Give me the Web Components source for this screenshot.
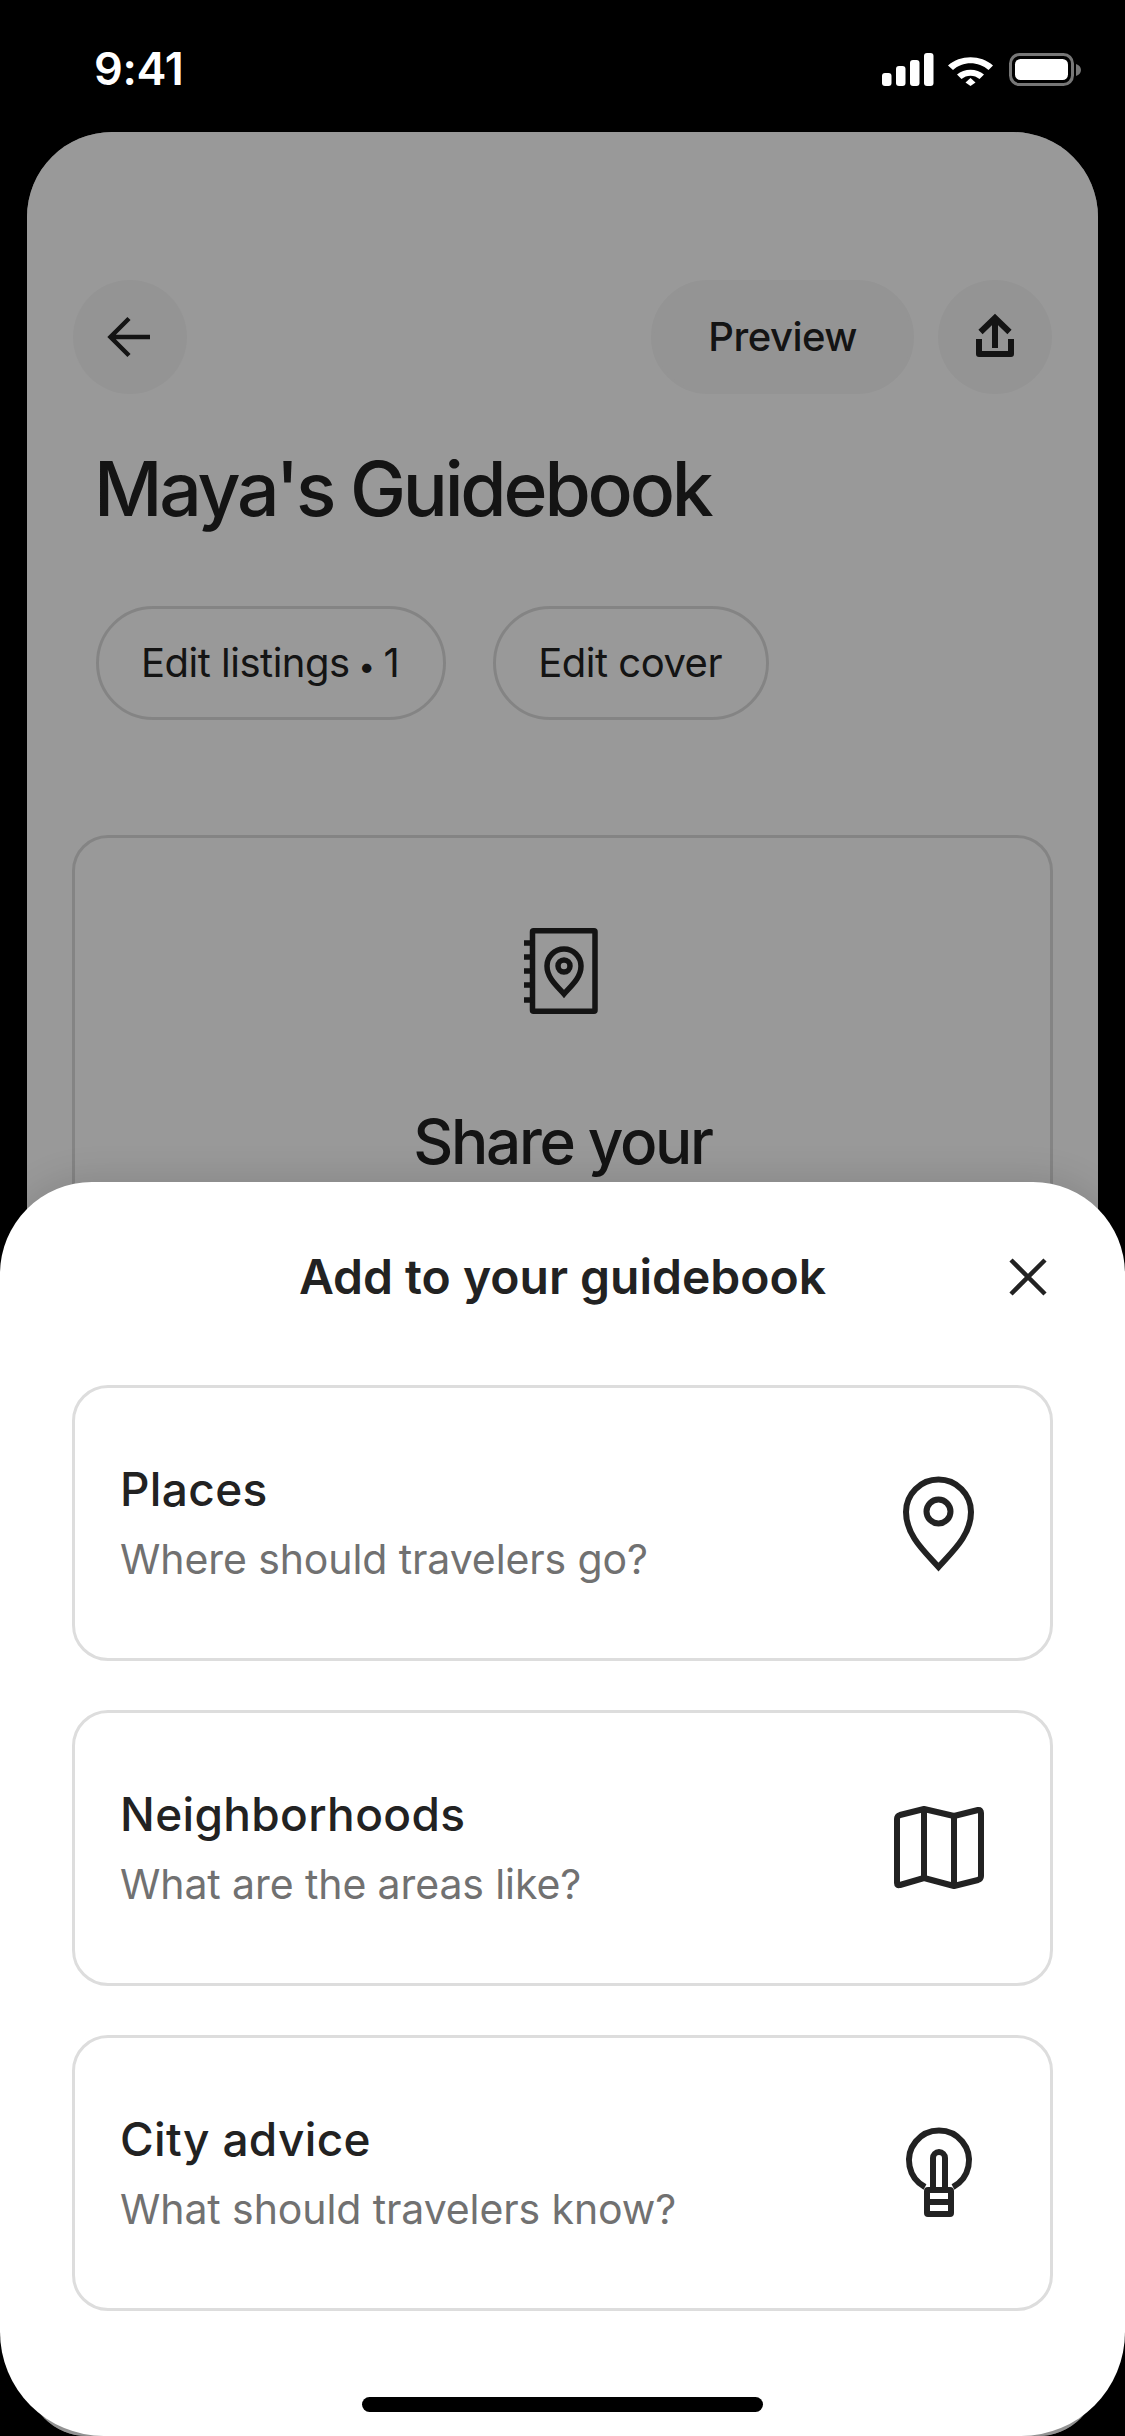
<!DOCTYPE html>
<html lang="en">
<head>
<meta charset="UTF-8">
<title>Maya's Guidebook</title>
<style>
  html, body { margin: 0; background: #000; }
  body { width: 1125px; height: 2436px; position: relative; overflow: hidden; font-family: Inter, "Liberation Sans", sans-serif; color: #222; }
</style>
</head>
<body>
  <status-bar></status-bar>
  <guide-page>
    <round-btn slot="left">
      <svg width="60" height="60" viewBox="0 0 60 60" fill="none" stroke="#222" stroke-width="4.5"><path d="M50 30H11M29 11.5 10.500 30 29 48.500"/></svg>
    </round-btn>
    <pill-btn slot="right" filled>Preview</pill-btn>
    <round-btn slot="right">
      <svg width="60" height="60" viewBox="0 0 60 60" fill="none" stroke="#222" stroke-width="6"><path d="M15.500 25 30 11 44.500 25M30 12V41"/><path d="M14 32V47H46V32" stroke-linejoin="round"/></svg>
    </round-btn>
    <pill-btn slot="edit">Edit listings <span style="font-size:30px;margin:0 -2px">•</span> 1</pill-btn>
    <pill-btn slot="edit">Edit cover</pill-btn>
  </guide-page>
  <guide-sheet heading="Add to your guidebook">
    <option-card>
      <span slot="title">Places</span>
      <span slot="sub">Where should travelers go?</span>
      <svg slot="icon" width="120" height="120" viewBox="0 0 120 120" fill="none" stroke="#222" stroke-width="6" stroke-linejoin="miter"><path d="M59.500 104C45 88 27 72 27 49a32.500 32.500 0 0 1 65 0C92 72 74 88 59.500 104Z"/><circle cx="59.500" cy="48.500" r="12"/></svg>
    </option-card>
    <option-card>
      <span slot="title">Neighborhoods</span>
      <span slot="sub">What are the areas like?</span>
      <svg slot="icon" width="120" height="120" viewBox="0 0 120 120" fill="none" stroke="#222" stroke-width="6" stroke-linejoin="round"><path d="M18 31Q18 28 21 27L45 21 75 28 99 22Q102 21.500 102 25V88Q102 91 99 92L75 98 45 90 21 97Q18 98 18 95Z"/><path d="M45 21V90M75 28V98"/></svg>
    </option-card>
    <option-card>
      <span slot="title">City advice</span>
      <span slot="sub">What should travelers know?</span>
      <svg slot="icon" width="120" height="120" viewBox="0 1 120 120" fill="none" stroke="#222" stroke-width="6" stroke-linejoin="round"><path d="M46 75A30 30 0 1 1 74 75"/><path d="M54 78V46a6 6 0 0 1 12 0V78"/><rect x="48" y="78" width="24" height="24" rx="1"/><path d="M48 90H72"/></svg>
    </option-card>
  </guide-sheet>

  <template id="status-bar">
    <style>
      :host { display: flex; height: 132px; box-sizing: border-box; padding: 44px 43px 0 94px; justify-content: space-between; align-items: flex-start; }
      .time { font: 600 45px/50px Inter, "Liberation Sans", sans-serif; color: #fff; letter-spacing: -.3px; }
      svg { display: block; margin-top: 9px; }
    </style>
    <span class="time">9:41</span>
    <svg width="200" height="34" viewBox="0 0 200 34">
      <g fill="#fff">
        <rect x="0" y="20" width="9.500" height="13" rx="3"/>
        <rect x="14" y="13" width="9.500" height="20" rx="3"/>
        <rect x="28" y="7" width="9.500" height="26" rx="3"/>
        <rect x="42" y="0" width="9.500" height="33" rx="3"/>
        <path d="M66 12.500C78 1.500 99 1.500 111 12.500L106.500 17C96.500 8 80.500 8 71 17Z"/>
        <path d="M75 21.500C82 15 95 15 102 21.500L97.500 26C92.500 21.500 84.500 21.500 79.500 26Z"/>
        <path d="M83.500 29.500 88.500 25 93.500 29.500 88.500 33Z"/>
      </g>
      <rect x="128.500" y="1.500" width="62" height="30" rx="9" fill="none" stroke="#777" stroke-width="3"/>
      <rect x="133" y="6" width="53" height="21" rx="5.500" fill="#fff"/>
      <path d="M194 11C197 12 199 14 199 17S197 22 194 23Z" fill="#777"/>
    </svg>
  </template>

  <template id="round-btn">
    <style>
      :host { display: flex; width: 114px; height: 114px; border-radius: 50%; background: #f7f7f7; align-items: center; justify-content: center; }
      ::slotted(svg) { display: block; }
    </style>
    <slot></slot>
  </template>

  <template id="pill-btn">
    <style>
      :host { display: inline-flex; height: 114px; box-sizing: border-box; padding: 0 44px 0 42px; border-radius: 57px; align-items: center; border: 3px solid #ddd; font: 400 40px/1 Inter, "Liberation Sans", sans-serif; letter-spacing: -.5px; color: #222; white-space: nowrap; }
      :host([filled]) { background: #f7f7f7; border-color: #f7f7f7; font-weight: 500; padding: 0 54px; }
    </style>
    <span><slot></slot></span>
  </template>

  <template id="guide-page">
    <style>
      :host { display: block; position: relative; margin: 0 27px; height: 2304px; box-sizing: border-box; padding-top: 148px; background: #fff; border-radius: 85px 85px 60px 60px; overflow: hidden; }
      :host::after { content: ""; position: absolute; inset: 0; background: rgba(0,0,0,.4); }
      .top { display: flex; gap: 24px; padding: 0 46px; }
      .right { margin-left: auto; display: flex; gap: 24px; }
      h1 { margin: 43px 0 0 67px; font: 550 75px/104px Inter, "Liberation Sans", sans-serif; letter-spacing: -3.200px; color: #222; }
      .edit { display: flex; gap: 47px; margin: 65px 0 0 69px; }
      .cover { margin: 115px 45px 0; height: 700px; border: 3px solid #ddd; border-radius: 36px; box-sizing: border-box; padding-top: 90px; display: flex; flex-direction: column; align-items: center; }
      h2 { margin: 88px 0 0; font: 550 62px/80px Inter, "Liberation Sans", sans-serif; letter-spacing: -2.300px; color: #222; }
      svg { display: block; transform: translateX(-2px); }
    </style>
    <div class="top"><slot name="left"></slot><div class="right"><slot name="right"></slot></div></div>
    <h1>Maya's Guidebook</h1>
    <div class="edit"><slot name="edit"></slot></div>
    <div class="cover">
      <svg width="74" height="86" viewBox="0 0 74 86" fill="none" stroke="#222" stroke-width="5.500" stroke-linejoin="round">
        <rect x="8.500" y="2.750" width="62.500" height="80.500" rx="1"/>
        <path d="M0 15H10M0 29H10M0 43H10M0 57H10M0 72H10"/>
        <path d="M40 66C33 58 23 50 23 38a17 17 0 0 1 34 0C57 50 47 58 40 66Z" stroke-linejoin="miter"/>
        <circle cx="40" cy="38" r="6"/>
      </svg>
      <h2>Share your</h2>
    </div>
  </template>

  <template id="guide-sheet">
    <style>
      :host { display: block; position: absolute; left: 0; right: 0; top: 1182px; bottom: 0; background: #fff; border-radius: 92px 92px 104px 104px; box-shadow: 0 -4px 36px rgba(0,0,0,.12); }
      header { display: grid; grid-template-columns: 1fr auto 1fr; align-items: center; height: 203px; padding: 0 75px 14px; box-sizing: border-box; }
      h3 { grid-column: 2; margin: 0; font: 600 48px/60px Inter, "Liberation Sans", sans-serif; letter-spacing: 0; color: #222; }
      svg { grid-column: 3; justify-self: end; display: block; }
      .list { display: flex; flex-direction: column; gap: 49px; padding: 0 72px; }
      .home { position: absolute; left: 362px; top: 1215px; width: 401px; height: 15px; border-radius: 8px; background: #000; }
    </style>
    <header>
      <h3></h3>
      <svg width="44" height="44" viewBox="0 0 44 44" fill="none" stroke="#222" stroke-width="4.500"><path d="M5 5 39 39M39 5 5 39"/></svg>
    </header>
    <div class="list"><slot></slot></div>
    <div class="home"></div>
  </template>

  <template id="option-card">
    <style>
      :host { display: flex; height: 276px; box-sizing: border-box; align-items: center; justify-content: space-between; padding: 0 51px 0 45px; border: 3px solid #ddd; border-radius: 36px; background: #fff; }
      .text { display: flex; flex-direction: column; }
      .title { font: 500 46px/60px Inter, "Liberation Sans", sans-serif; letter-spacing: .35px; color: #222; }
      .sub { margin-top: 11px; font: 400 41px/58px Inter, "Liberation Sans", sans-serif; letter-spacing: -.1px; color: #717171; }
      ::slotted(svg) { display: block; }
    </style>
    <div class="text">
      <div class="title"><slot name="title"></slot></div>
      <div class="sub"><slot name="sub"></slot></div>
    </div>
    <slot name="icon"></slot>
  </template>

  <script>
    // every element here just clones its template, guide-sheet also takes a heading
    class TemplateElement extends HTMLElement {
      constructor() {
        super();
        const template = document.querySelector('#' + this.localName);
        this.attachShadow({ mode: 'open' }).append(template.content.cloneNode(true));
      }
    }
    customElements.define('status-bar', class extends TemplateElement {});
    customElements.define('round-btn', class extends TemplateElement {});
    customElements.define('pill-btn', class extends TemplateElement {});
    customElements.define('guide-page', class extends TemplateElement {});
    customElements.define('option-card', class extends TemplateElement {});
    customElements.define('guide-sheet', class extends TemplateElement {
      connectedCallback() {
        this.shadowRoot.querySelector('h3').textContent = this.getAttribute('heading');
      }
    });
  </script>
</body>
</html>
